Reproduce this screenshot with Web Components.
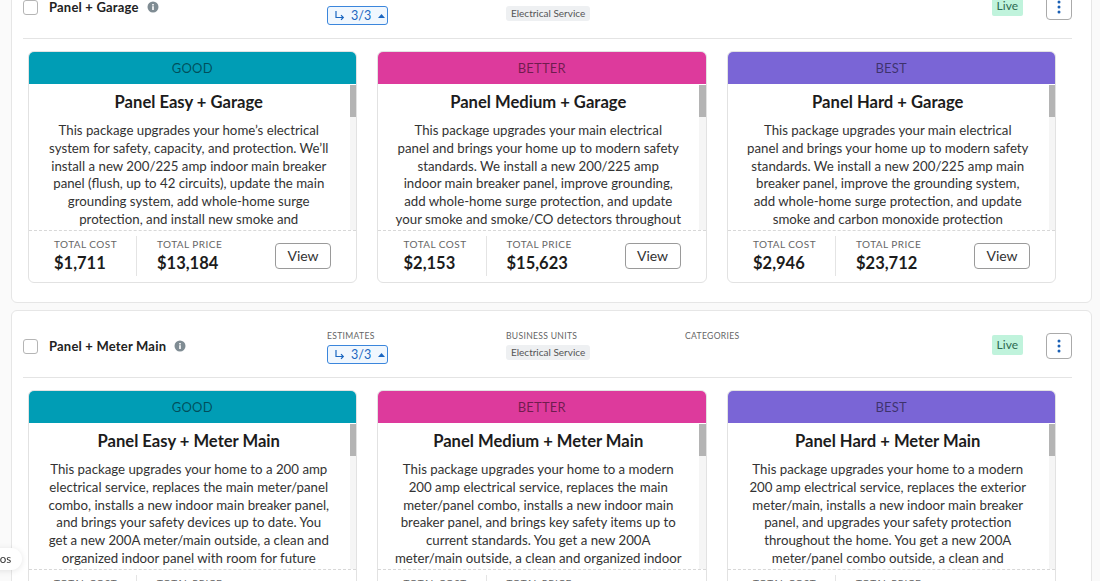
<!DOCTYPE html>
<html lang="en">
<head>
<meta charset="utf-8">
<title>Packages</title>
<style>
  html, body { margin: 0; height: 581px; overflow: hidden; background: #fafafa; }
  body { font: 14px/1.25 Lato, "Open Sans", sans-serif; color: #222; }
  .page { display: flex; flex-direction: column; gap: 6.5px; margin: -29.5px 8px 0 11px; }
</style>
</head>
<body>
<div class="page">
  <package-row name="Panel + Garage">
    <tier-card tier="good" title="Panel Easy + Garage" cost="$1,711" price="$13,184">
      This package upgrades your home’s electrical<br>system for safety, capacity, and protection. We’ll<br>install a new 200/225 amp indoor main breaker<br>panel (flush, up to 42 circuits), update the main<br>grounding system, add whole-home surge<br>protection, and install new smoke and
    </tier-card>
    <tier-card tier="better" title="Panel Medium + Garage" cost="$2,153" price="$15,623">
      This package upgrades your main electrical<br>panel and brings your home up to modern safety<br>standards. We install a new 200/225 amp<br>indoor main breaker panel, improve grounding,<br>add whole-home surge protection, and update<br>your smoke and smoke/CO detectors throughout
    </tier-card>
    <tier-card tier="best" title="Panel Hard + Garage" cost="$2,946" price="$23,712">
      This package upgrades your main electrical<br>panel and brings your home up to modern safety<br>standards. We install a new 200/225 amp main<br>breaker panel, improve the grounding system,<br>add whole-home surge protection, and update<br>smoke and carbon monoxide protection
    </tier-card>
  </package-row>
  <package-row name="Panel + Meter Main">
    <tier-card tier="good" title="Panel Easy + Meter Main" cost="$1,711" price="$13,184">
      This package upgrades your home to a 200 amp<br>electrical service, replaces the main meter/panel<br>combo, installs a new indoor main breaker panel,<br>and brings your safety devices up to date. You<br>get a new 200A meter/main outside, a clean and<br>organized indoor panel with room for future
    </tier-card>
    <tier-card tier="better" title="Panel Medium + Meter Main" cost="$2,153" price="$15,623">
      This package upgrades your home to a modern<br>200 amp electrical service, replaces the main<br>meter/panel combo, installs a new indoor main<br>breaker panel, and brings key safety items up to<br>current standards. You get a new 200A<br>meter/main outside, a clean and organized indoor
    </tier-card>
    <tier-card tier="best" title="Panel Hard + Meter Main" cost="$2,946" price="$23,712">
      This package upgrades your home to a modern<br>200 amp electrical service, replaces the exterior<br>meter/main, installs a new indoor main breaker<br>panel, and upgrades your safety protection<br>throughout the home. You get a new 200A<br>meter/panel combo outside, a clean and
    </tier-card>
  </package-row>
</div>
<floating-tab>Photos</floating-tab>

<script type="module">
class PackageRow extends HTMLElement {
  constructor() {
    super();
    this.attachShadow({ mode: 'open' });
    this.shadowRoot.innerHTML = `
      <style>
        :host {
          display: block;
          background: #fff;
          border: 1px solid #e6e6e6;
          border-radius: 6px;
          padding: 0 19px 19.5px 11px;
          flex: none;
        }
        header {
          display: grid;
          grid-template-columns: 304px 179px 179px 179px 1fr;
          align-items: center;
          height: 62px;
          padding-top: 4px;
          border-bottom: 1px solid #e4e4e4;
          color: #222;
        }
        .name { display: flex; align-items: center; gap: 11px; padding-top: 1px; }
        .check {
          inline-size: 13px;
          block-size: 13px;
          border: 1px solid #b5b5b5;
          border-radius: 3px;
          background: #fff;
        }
        .title { font-size: 13px; font-weight: 700; letter-spacing: .2px; }
        .name svg { margin-left: -3px; }
        .col { display: flex; flex-direction: column; align-items: flex-start; gap: 3.5px; align-self: start; padding-top: 16px; }
        .label { font-size: 8.6px; line-height: 11px; letter-spacing: .3px; color: #666; text-transform: uppercase; }
        .chip {
          display: flex;
          align-items: center;
          gap: 6px;
          box-sizing: border-box;
          inline-size: 61px;
          block-size: 19px;
          padding-left: 6px;
          border: 1px solid #3b86dc;
          border-radius: 3px;
          background: #f0f7fe;
          color: #1a66c0;
          font-size: 12.5px;
        }
        .tag {
          padding: 0 5px;
          line-height: 15px;
          font-size: 10px;
          color: #555;
          background: #eef0f2;
          border-radius: 3px;
        }
        .end { display: flex; align-items: center; justify-content: flex-end; gap: 23px; }
        .live {
          margin-top: -2px;
          padding: 0 5px;
          line-height: 20px;
          font-size: 12px;
          color: #2d6a50;
          background: #c0f3dc;
          border-radius: 2px;
        }
        .more {
          display: flex;
          align-items: center;
          justify-content: center;
          box-sizing: border-box;
          inline-size: 26px;
          block-size: 26px;
          padding: 0;
          border: 1.5px solid #aaa;
          border-radius: 4px;
          background: #fff;
        }
        .tiers { display: flex; gap: 20px; margin: 12.5px 0 0 4.5px; }
      </style>
      <header>
        <div class="name">
          <span class="check"></span>
          <span class="title"></span>
          <svg width="12" height="12" viewBox="0 0 12 12" aria-hidden="true">
            <circle cx="6" cy="6" r="5.5" fill="#7f8c93"/>
            <rect x="5.2" y="5.2" width="1.6" height="3.8" fill="#fff"/>
            <rect x="5.2" y="3" width="1.6" height="1.5" fill="#fff"/>
          </svg>
        </div>
        <div class="col">
          <span class="label">Estimates</span>
          <span class="chip">
            <svg width="11" height="11" viewBox="0 0 11 11" fill="none" stroke="currentColor" stroke-width="1.2" aria-hidden="true">
              <path d="M2 1v6.5h7M7 5.2l2.3 2.3L7 9.8"/>
            </svg>
            <span>3/3</span>
            <svg width="7" height="4" viewBox="0 0 7 4" style="margin-left:1px" aria-hidden="true"><path d="M3.5 0L7 4H0z" fill="currentColor"/></svg>
          </span>
        </div>
        <div class="col">
          <span class="label">Business Units</span>
          <span class="tag">Electrical Service</span>
        </div>
        <div class="col"><span class="label">Categories</span></div>
        <div class="end">
          <span class="live">Live</span>
          <button class="more" aria-label="More">
            <svg width="4" height="14" viewBox="0 0 4 14" aria-hidden="true">
              <circle cx="2" cy="2" r="1.5" fill="#1a5fb4"/><circle cx="2" cy="7" r="1.5" fill="#1a5fb4"/><circle cx="2" cy="12" r="1.5" fill="#1a5fb4"/>
            </svg>
          </button>
        </div>
      </header>
      <div class="tiers"><slot></slot></div>
    `;
  }

  connectedCallback() {
    this.shadowRoot.querySelector('.title').textContent = this.getAttribute('name');
  }
}

const TIERS = {
  good: { label: 'Good', color: '#009db5' },
  better: { label: 'Better', color: '#dd3a9c' },
  best: { label: 'Best', color: '#7a65d6' }
};

class TierCard extends HTMLElement {
  constructor() {
    super();
    this.attachShadow({ mode: 'open' });
    this.shadowRoot.innerHTML = `
      <style>
        :host {
          display: flex;
          flex-direction: column;
          box-sizing: border-box;
          flex: none;
          inline-size: 329.5px;
          block-size: 231.5px;
          background: #fff;
          border: 1px solid #e2e2e2;
          border-radius: 6px;
          overflow: hidden;
        }
        .band {
          block-size: 32px;
          line-height: 33px;
          flex: none;
          text-align: center;
          font-size: 13px;
          letter-spacing: .2px;
          text-transform: uppercase;
          color: rgb(0 0 0 / .5);
        }
        .body { position: relative; flex: 1; overflow: hidden; padding-right: 7px; }
        .scroll {
          position: absolute;
          top: 1px;
          right: 0;
          bottom: 0;
          inline-size: 6.5px;
          background: #f5f5f5;
        }
        .scroll::before { content: ""; display: block; block-size: 32px; background: #b4b4b4; }
        h3 { margin: 7px 0 9px; font-size: 16.6px; line-height: 22px; font-weight: 700; text-align: center; color: #1c1c1c; }
        .text { font-size: 13.25px; line-height: 17.8px; text-align: center; white-space: nowrap; color: #333; }
        footer {
          display: flex;
          align-items: center;
          flex: none;
          block-size: 52px;
          box-sizing: border-box;
          padding: 5.5px 25px 6px 25.5px;
          border-top: 1px dashed #d8d8d8;
        }
        .cell { display: flex; flex-direction: column; gap: 3px; }
        .cell span { font-size: 10px; line-height: 12px; letter-spacing: .45px; color: #666; text-transform: uppercase; }
        .cell b { font-size: 16.5px; line-height: 21px; font-weight: 700; color: #1c1c1c; }
        .cost { inline-size: 82px; }
        .sep { inline-size: 1px; align-self: stretch; background: #e4e4e4; margin-right: 20px; }
        button {
          margin-left: auto;
          inline-size: 56px;
          block-size: 26px;
          padding: 0;
          font: inherit;
          font-size: 14px;
          color: #333;
          background: #fff;
          border: 1px solid #9a9a9a;
          border-radius: 4px;
        }
      </style>
      <div class="band"></div>
      <div class="body">
        <h3></h3>
        <div class="text"><slot></slot></div>
        <div class="scroll"></div>
      </div>
      <footer>
        <div class="cell cost"><span>Total Cost</span><b class="c"></b></div>
        <div class="sep"></div>
        <div class="cell"><span>Total Price</span><b class="p"></b></div>
        <button>View</button>
      </footer>
    `;
  }

  connectedCallback() {
    const tier = TIERS[this.getAttribute('tier')] ?? TIERS.good;
    const band = this.shadowRoot.querySelector('.band');
    band.textContent = tier.label;
    band.style.background = tier.color;
    this.shadowRoot.querySelector('h3').textContent = this.getAttribute('title');
    this.shadowRoot.querySelector('.c').textContent = this.getAttribute('cost');
    this.shadowRoot.querySelector('.p').textContent = this.getAttribute('price');
  }
}

class FloatingTab extends HTMLElement {
  constructor() {
    super();
    this.attachShadow({ mode: 'open' });
    this.shadowRoot.innerHTML = `
      <style>
        :host {
          position: fixed;
          left: -24px;
          top: 548px;
          display: block;
          box-sizing: border-box;
          inline-size: 46px;
          block-size: 22px;
          padding-right: 11px;
          line-height: 21px;
          font-size: 11.5px;
          text-align: right;
          white-space: nowrap;
          color: #333;
          background: #fff;
          border-radius: 11px;
          box-shadow: 0 1px 6px rgb(0 0 0 / .1);
        }
      </style>
      <slot></slot>
    `;
  }
}

customElements.define('package-row', PackageRow);
customElements.define('tier-card', TierCard);
customElements.define('floating-tab', FloatingTab);
</script>
</body>
</html>
